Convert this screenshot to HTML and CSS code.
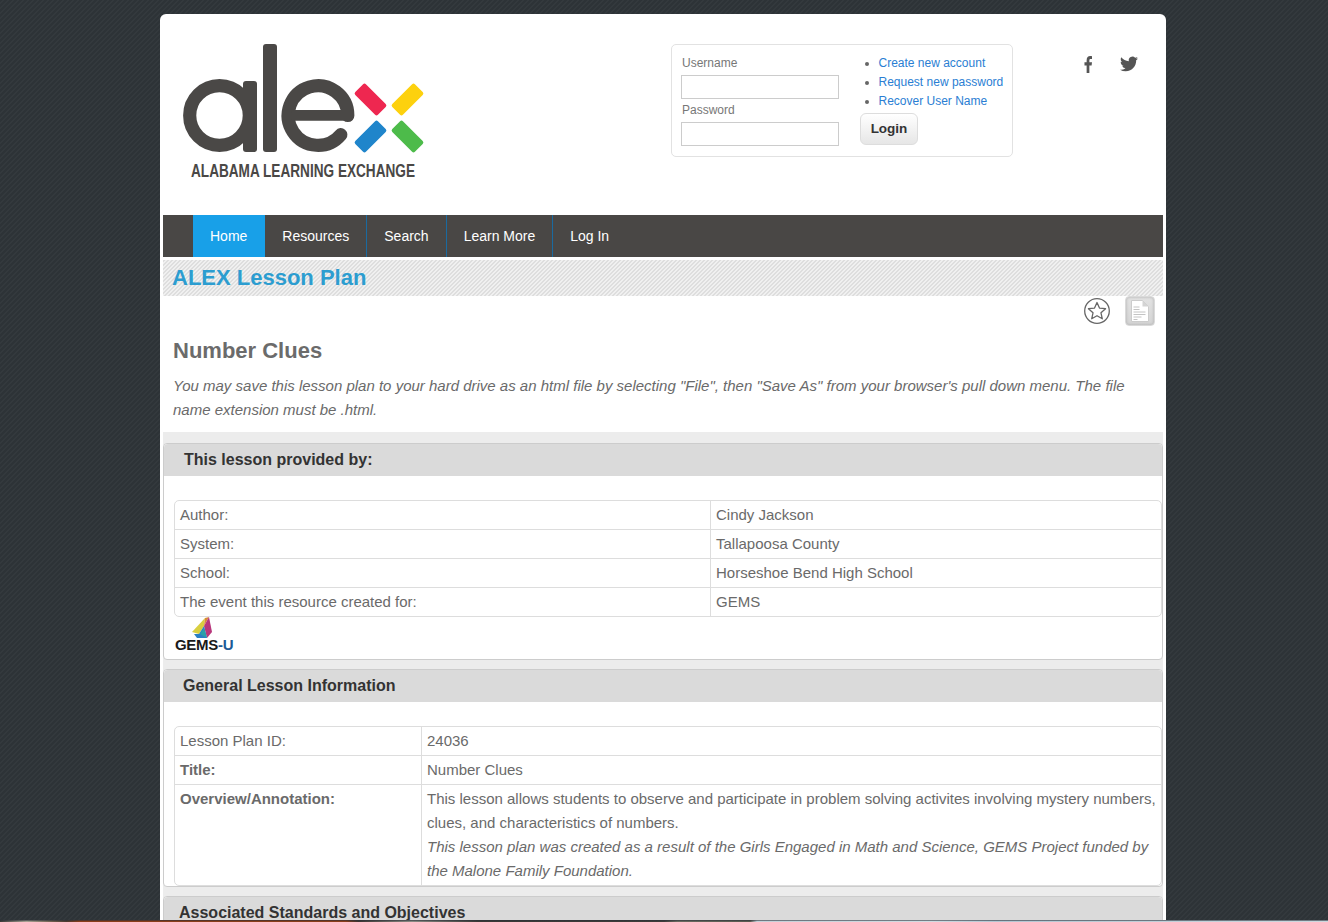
FILE: index.html
```html
<!DOCTYPE html>
<html lang="en">
<head>
<meta charset="utf-8">
<title>ALEX Lesson Plan</title>
<link rel="stylesheet" href="styles.css">
</head>
<body>
<div class="page">
  <header class="header">
    <a class="logo" href="#" aria-label="ALEX">
      <svg class="logo-svg" viewBox="180 40 340 145" width="340" height="145">
        <g fill="none" stroke="#4a4846" stroke-width="13.2">
          <circle cx="219.5" cy="115.500" r="29.800"/>
          <path d="M347.800 115.500 A29.800 29.800 0 1 0 340.800 134.700" stroke-linecap="round"/>
        </g>
        <rect x="243" y="81" width="14" height="71" rx="3" fill="#4a4846"/>
        <rect x="263" y="44" width="14" height="108" rx="3" fill="#4a4846"/>
        <rect x="291" y="110" width="62" height="10.700" rx="3" fill="#4a4846"/>
        <rect x="354.500" y="92" width="32" height="15" rx="2" fill="#ee2750" transform="rotate(45 370.500 99.500)"/>
        <rect x="391.500" y="92" width="32" height="15" rx="2" fill="#fdd10e" transform="rotate(-45 407.500 99.500)"/>
        <rect x="354.500" y="129" width="32" height="15" rx="2" fill="#1f85cb" transform="rotate(-45 370.500 136.500)"/>
        <rect x="391.500" y="129" width="32" height="15" rx="2" fill="#4dbb4a" transform="rotate(45 407.500 136.500)"/>
        <text class="logo-tag" x="191" y="177" textLength="224" lengthAdjust="spacingAndGlyphs">ALABAMA LEARNING EXCHANGE</text>
      </svg>
    </a>
    <form class="login">
      <div class="login-fields">
        <label class="login-label" for="u">Username</label>
        <input class="login-input" id="u" type="text">
        <label class="login-label login-label-second" for="p">Password</label>
        <input class="login-input" id="p" type="password">
      </div>
      <div class="login-side">
        <ul class="login-links">
          <li><a href="#">Create new account</a></li>
          <li><a href="#">Request new password</a></li>
          <li><a href="#">Recover User Name</a></li>
        </ul>
        <button class="login-btn" type="button">Login</button>
      </div>
    </form>
    <div class="social">
      <svg class="social-f" viewBox="0 0 10 18" width="8" height="17" preserveAspectRatio="none"><path d="M6.700 18V10h2.800l.5-3.300H6.700V4.800c0-.9.3-1.500 1.600-1.500H10V.3C9.600.2 8.700.1 7.600.1 5.200.1 3.300 1.700 3.300 4.400v2.300H.6V10h2.700v8z" fill="#555"/></svg>
      <svg class="social-t" viewBox="0 0 24 24" width="18" height="18"><path d="M23.950 4.570a10 10 0 0 1-2.820.770 4.960 4.960 0 0 0 2.160-2.720c-.950.550-2 .950-3.130 1.180a4.920 4.920 0 0 0-8.380 4.480C7.690 8.090 4.070 6.130 1.640 3.160a4.820 4.820 0 0 0-.660 2.470c0 1.710.870 3.210 2.190 4.100a4.900 4.900 0 0 1-2.230-.620v.060a4.920 4.920 0 0 0 3.950 4.830 5 5 0 0 1-2.210.080 4.940 4.940 0 0 0 4.600 3.420A9.870 9.870 0 0 1 0 19.540a14 14 0 0 0 7.560 2.210c9.050 0 14-7.500 14-13.980 0-.210 0-.420-.020-.630a9.940 9.940 0 0 0 2.410-2.570z" fill="#555"/></svg>
    </div>
  </header>

  <nav class="nav">
    <a class="nav-item nav-active" href="#">Home</a>
    <a class="nav-item" href="#">Resources</a>
    <a class="nav-item" href="#">Search</a>
    <a class="nav-item" href="#">Learn More</a>
    <a class="nav-item nav-last" href="#">Log In</a>
  </nav>

  <div class="banner"><h1 class="banner-title">ALEX Lesson Plan</h1></div>

  <div class="tools">
    <svg class="tool-star" viewBox="0 0 28 28" width="28" height="28">
      <circle cx="14" cy="14" r="12.300" fill="none" stroke="#666" stroke-width="1.300"/>
      <path d="M14 5.500L16.470 11.100 22.560 11.720 17.990 15.800 19.290 21.780 14 18.700 8.710 21.780 10.010 15.800 5.440 11.720 11.530 11.100z" fill="none" stroke="#666" stroke-width="1.300" stroke-linejoin="round"/>
    </svg>
    <span class="tool-doc">
      <svg viewBox="0 0 18 22" width="18" height="22">
        <path d="M.5.5h11l6 6v15H.5z" fill="#fff" stroke="#ccc"/>
        <path d="M11.500.5v6h6z" fill="#d4d4d4"/>
        <path d="M2.500 7h6M2.500 9.500h6M2.500 12h12M2.500 14.500h12M2.500 17h8M2.500 19.500h4" stroke="#b5b5b5" stroke-width=".8"/>
      </svg>
    </span>
  </div>

  <div class="intro">
    <h2 class="intro-title">Number Clues</h2>
    <p class="intro-note">You may save this lesson plan to your hard drive as an html file by selecting "File", then "Save As" from your browser's pull down menu. The file name extension must be .html.</p>
  </div>

  <main class="content">
    <section class="panel">
      <h3 class="panel-head panel-head-first">This lesson provided by:</h3>
      <div class="panel-body">
        <table class="info info-author">
          <tr><td>Author:</td><td>Cindy Jackson</td></tr>
          <tr><td>System:</td><td>Tallapoosa County</td></tr>
          <tr><td>School:</td><td>Horseshoe Bend High School</td></tr>
          <tr><td>The event this resource created for:</td><td>GEMS</td></tr>
        </table>
        <div class="gems">
          <svg class="gems-mark" viewBox="0 0 22 22" width="22" height="22">
            <path d="M14 1L1 15l7 2 5-8z" fill="#d9cf3f"/>
            <path d="M14 1l4-1-5 9z" fill="#d98a3a"/>
            <path d="M18 0l3 15-5 6-3-12z" fill="#b8377c"/>
            <path d="M3 17l5 0 5-8 3 12H6z" fill="#2a7fc4"/>
            <path d="M9 17l4-6 3 10z" fill="#2aa0a8"/>
          </svg>
          <span class="gems-text">GEMS<span class="gems-u">-U</span></span>
        </div>
      </div>
    </section>

    <section class="panel">
      <h3 class="panel-head">General Lesson Information</h3>
      <div class="panel-body panel-body-last">
        <table class="info info-general">
          <tr><td>Lesson Plan ID:</td><td>24036</td></tr>
          <tr><td class="info-key">Title:</td><td>Number Clues</td></tr>
          <tr>
            <td class="info-key">Overview/Annotation:</td>
            <td>This lesson allows students to observe and participate in problem solving activites involving mystery numbers, clues, and characteristics of numbers.<br><em>This lesson plan was created as a result of the Girls Engaged in Math and Science, GEMS Project funded by the Malone Family Foundation.</em></td>
          </tr>
        </table>
      </div>
    </section>

    <section class="panel">
      <h3 class="panel-head panel-head-third">Associated Standards and Objectives</h3>
    </section>
  </main>
</div>
<div class="photo-strip"></div>
</body>
</html>
```
FILE: styles.css
```css
* { box-sizing: border-box; }
html, body { height: 100%; overflow: hidden; }
body {
  margin: 0;
  font-family: "Liberation Sans", Arial, sans-serif;
  color: #6a6a6a;
  background-color: #31373b;
  background-image: linear-gradient(135deg, #2d3337 25%, #33393d 25%, #33393d 50%, #2d3337 50%, #2d3337 75%, #33393d 75%);
  background-size: 5px 5px;
}
.page {
  width: 1006px;
  margin: 14px 0 0 160px;
  padding: 0 3px;
  background: #fff;
  border-radius: 6px 6px 0 0;
  min-height: 908px;
}
.header { height: 201px; display: flex; align-items: flex-start; }
.logo { display: block; margin: 26px 0 0 17px; width: 340px; height: 145px; flex: none; }
.logo-svg { display: block; }
.logo-tag { font-family: "Liberation Sans", sans-serif; font-weight: 700; font-size: 18.500px; fill: #4a4846; }
.login {
  flex: none;
  display: flex;
  width: 342px;
  height: 113px;
  margin: 30px 0 0 151px;
  padding: 11px 0 0 9px;
  border: 1px solid #e2e2e2;
  border-radius: 5px;
  font-size: 12px;
}
.login-fields { width: 158px; flex: none; display: flex; flex-direction: column; }
.login-label { display: block; height: 14px; padding-left: 1px; line-height: 14px; color: #777; margin-bottom: 5px; }
.login-label-second { margin: 4px 0 5px; }
.login-input { display: block; width: 158px; height: 24px; border: 1px solid #ccc; background: #fff; padding: 0; margin: 0; }
.login-side { margin-left: 21px; flex: none; }
.login-links { margin: -2px 0 0; padding: 0 0 0 18.500px; list-style: disc; line-height: 19px; color: #666; }
.login-links a { color: #2a7ed3; text-decoration: none; }
.login-btn {
  display: block;
  width: 58px;
  height: 32px;
  margin-top: 2px;
  padding: 0 0 2px;
  font: 700 13.500px "Liberation Sans", Arial, sans-serif;
  color: #333;
  background: linear-gradient(#fff, #e6e6e6);
  border: 1px solid #ddd;
  border-radius: 6px;
}
.social { display: flex; align-items: center; margin: 41px 0 0 71px; }
.social-f { margin-right: 28px; }
.nav { display: flex; height: 42px; background: #494745; padding-left: 30px; }
.nav-item {
  display: block;
  padding: 0 17px;
  line-height: 42px;
  font-size: 14px;
  color: #fff;
  text-decoration: none;
  border-right: 1px solid #1a6a9f;
}
.nav-active { background: #18a0e8; border-right: 0; padding-right: 18px; }
.nav-last { border-right: 0; }
.banner {
  height: 36px;
  margin-top: 3px;
  padding-left: 9px;
  background-color: #ececec;
  background-image: linear-gradient(135deg, #dedede 25%, #f0f0f0 25%, #f0f0f0 50%, #dedede 50%, #dedede 75%, #f0f0f0 75%);
  background-size: 4px 4px;
}
.banner-title { margin: 0; font-size: 22px; line-height: 36px; font-weight: 700; color: #2c9dd0; }
.tools { display: flex; justify-content: flex-end; height: 30px; padding-right: 8px; }
.tool-star { margin: 1px 14px 0 0; }
.tool-doc {
  display: flex;
  align-items: center;
  justify-content: center;
  width: 30px;
  height: 30px;
  background: linear-gradient(#e2e2e2, #d4d4d4);
  border: 1px solid #dadada;
  border-radius: 4px;
  box-shadow: inset 0 0 3px #aaa;
}
.intro { height: 106px; padding: 12px 10px 0; }
.intro-title { margin: 0; font-size: 22px; line-height: 26px; font-weight: 700; color: #6b6b6b; }
.intro-note { margin: 10px 0 0; font-size: 15px; line-height: 24px; font-style: italic; }
.content { background: #ececec; padding-top: 11px; min-height: 500px; }
.panel { background: #fff; border: 1px solid #ccc; border-radius: 4px; margin-bottom: 9px; }
.panel-head {
  margin: 0;
  height: 32px;
  padding-left: 19px;
  background: #dadada;
  font-size: 16px;
  line-height: 31px;
  font-weight: 700;
  color: #333;
  border-radius: 4px 4px 0 0;
}
.panel-head-first { padding-left: 20px; }
.panel-head-third { padding-left: 15px; }
.panel-body { padding: 24px 0 0 10px; }
.info {
  width: 988px;
  border-collapse: separate;
  border-spacing: 0;
  border: 1px solid #ddd;
  border-radius: 5px;
  font-size: 15px;
  line-height: 24px;
}
.info td { padding: 2px 5px; vertical-align: top; border-bottom: 1px solid #ddd; }
.info tr:last-child td { border-bottom: 0; }
.info td:first-child { border-right: 1px solid #ddd; }
.info-author td:first-child { width: 536px; }
.info-general td:first-child { width: 247px; }
.info-key { font-weight: 700; }
.gems { display: flex; flex-direction: column; align-items: flex-start; height: 42px; padding-left: 1px; }
.gems-mark { margin: 0 0 0 16px; display: block; }
.gems-text { font-size: 15px; line-height: 12px; font-weight: 700; color: #1a1a1a; letter-spacing: -.3px; }
.gems-u { color: #1c5a96; }
.photo-strip {
  position: fixed;
  left: 0;
  right: 0;
  bottom: 0;
  height: 2px;
  border-top: 1px solid rgba(40, 48, 56, .55);
  background: linear-gradient(90deg, #3a3a38 0, #a8a294 2%, #6a5a4a 4%, #4a3a30 5%, #8a3d1a 6%, #8a3d1a 26%, #3a3432 27%, #8a8a84 31%, #3a3836 36%, #3e3c3a 50%, #6a6a60 51%, #5a5a50 56.500%, #c4d0d8 57%, #d0dce2 70%, #b4c6d2 75%, #ccd8de 100%);
}
```
